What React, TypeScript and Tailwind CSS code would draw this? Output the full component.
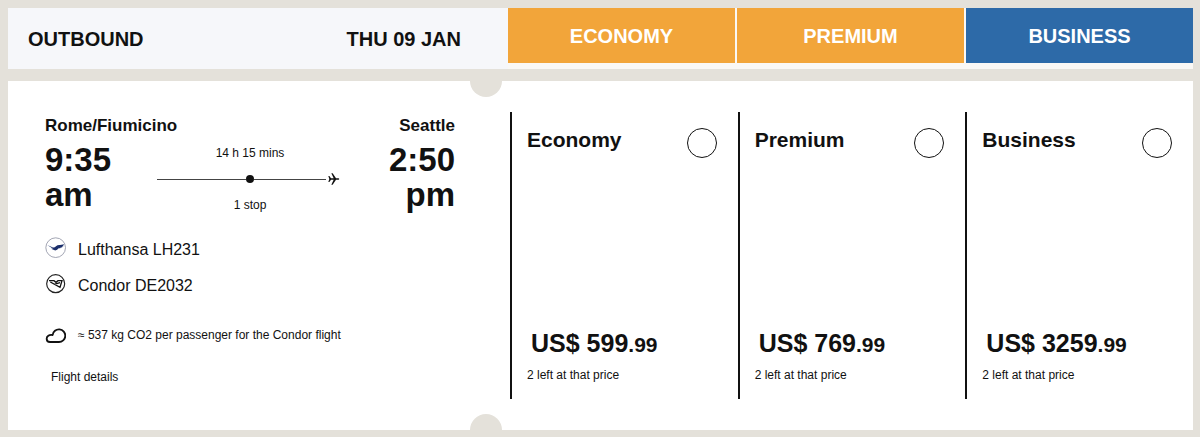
import { useState } from "react";

const fares = [
  { id: "economy", name: "Economy", whole: "599", cents: "99", left: 2, tab: "bg-[#f2a53a]" },
  { id: "premium", name: "Premium", whole: "769", cents: "99", left: 2, tab: "bg-[#f2a53a]" },
  { id: "business", name: "Business", whole: "3259", cents: "99", left: 2, tab: "bg-[#2d6aa8]" },
];

function LufthansaLogo() {
  return (
    <svg className="h-[21px] w-[21px] shrink-0" viewBox="0 0 63 63" aria-hidden="true">
      <circle cx="32" cy="32" r="29.5" fill="#fff" stroke="#8f93a3" strokeWidth="2.5" />
      <path
        d="M7 24 L22 31 Q28 33 33 28 Q38 23 45 24 L58 22 L54 26 L56 27 L51 29 L52 31 L46 32 L46 34 L41 34 Q36 41 29 40 L18 35 L24 35 Z"
        fill="#1b2f6b"
      />
    </svg>
  );
}

function CondorLogo() {
  return (
    <svg className="h-[21px] w-[21px] shrink-0" viewBox="0 0 63 63" aria-hidden="true">
      <circle cx="32" cy="32" r="27" fill="#fff" stroke="#222" strokeWidth="3.5" />
      <path
        d="M12 23 H27 L33 28 L39 23 H51 L45 43 L16 27 M28 34 L45 29"
        fill="none"
        stroke="#111"
        strokeWidth="4"
      />
    </svg>
  );
}

function CloudIcon() {
  return (
    <svg className="h-[15px] w-[21px] shrink-0" viewBox="0 0 63 45" aria-hidden="true">
      <path
        d="M15 42 H41 A19 19 0 1 0 23 21 C12 19 5 25 5 32 C5 38 9 42 15 42 Z"
        fill="none"
        stroke="#111"
        strokeWidth="5.5"
        strokeLinejoin="round"
      />
    </svg>
  );
}

function PlaneIcon() {
  return (
    <svg className="h-3 w-3 shrink-0" viewBox="0 0 36 36" aria-hidden="true">
      <path
        d="M1 9 H4 L9 16 H17 L10 1 H14 L24 16 H32 Q36 18 32 20 H24 L14 35 H10 L17 20 H9 L4 27 H1 L4 18 Z"
        fill="#111"
      />
    </svg>
  );
}

function FlightSummary() {
  return (
    <div className="pt-1 pr-[55px] pb-[14px] pl-[37px]">
      <div className="flex justify-between text-[17px] leading-5 font-bold">
        <span>Rome/Fiumicino</span>
        <span>Seattle</span>
      </div>

      <div className="mt-[6px] grid grid-cols-[68px_1fr_68px] gap-11">
        <div className="text-[33px] leading-[35px] font-bold">9:35 am</div>
        <div className="pt-[3px] text-center text-xs leading-4">
          <p>14 h 15 mins</p>
          <div className="my-[10px] grid h-4 grid-cols-[1fr_8px_1fr] items-center">
            <span className="h-px bg-[#444]" />
            <span className="h-2 rounded-full bg-[#111]" />
            <div className="flex items-center gap-[2px] pr-[3px]">
              <span className="h-px flex-1 bg-[#444]" />
              <PlaneIcon />
            </div>
          </div>
          <p>1 stop</p>
        </div>
        <div className="text-right text-[33px] leading-[35px] font-bold">2:50 pm</div>
      </div>

      <ul className="mt-6 flex flex-col gap-[10px] text-base leading-[26px]">
        <li className="flex items-start gap-3">
          <LufthansaLogo />
          Lufthansa LH231
        </li>
        <li className="flex items-start gap-3">
          <CondorLogo />
          Condor DE2032
        </li>
      </ul>

      <div className="mt-7 flex items-center gap-3 text-xs leading-4">
        <CloudIcon />
        <span>≈ 537 kg CO2 per passenger for the Condor flight</span>
      </div>

      <button type="button" className="mt-[26px] ml-[6px] block text-xs leading-4">
        Flight details
      </button>
    </div>
  );
}

export default function App() {
  const [selected, setSelected] = useState("");

  return (
    <main className="min-h-screen bg-[#e4e1da] pt-2 pr-[7px] pb-[7px] pl-2 font-['Liberation_Sans',Arial,sans-serif] text-[#111]">
      <header className="grid grid-cols-[500fr_685fr] bg-[#f6f7fa] text-xl leading-6 font-bold">
        <div className="flex items-center justify-between pr-[47px] pl-5">
          <h1>OUTBOUND</h1>
          <span>THU 09 JAN</span>
        </div>
        <div className="grid grid-cols-3 gap-[2px] bg-[#faf8f5] pb-[6px]">
          {fares.map((fare) => (
            <button
              key={fare.id}
              type="button"
              onClick={() => setSelected(fare.id)}
              className={`h-[55px] text-white uppercase ${fare.tab}`}
            >
              {fare.name}
            </button>
          ))}
        </div>
      </header>

      <section className="relative mt-3 grid grid-cols-[502fr_683fr] overflow-hidden bg-white py-[31px]">
        {/* Ticket notches */}
        <span className="absolute -top-4 left-[39%] h-8 w-8 rounded-full bg-[#e4e1da]" />
        <span className="absolute -bottom-4 left-[39%] h-8 w-8 rounded-full bg-[#e4e1da]" />

        <FlightSummary />

        <div className="grid grid-cols-3">
          {fares.map((fare) => (
            <div key={fare.id} className="flex flex-col justify-between border-l-2 border-[#111] pt-4 pb-4 pl-[15px]">
              <div className="flex items-start justify-between pr-[21px]">
                <label htmlFor={fare.id} className="text-[21px] leading-6 font-bold">
                  {fare.name}
                </label>
                <input
                  id={fare.id}
                  type="radio"
                  name="fare"
                  checked={selected === fare.id}
                  onChange={() => setSelected(fare.id)}
                  className="h-[30px] w-[30px] appearance-none rounded-full border border-[#111] checked:border-8"
                />
              </div>
              <div>
                <p className="ml-1 text-[25px] leading-7 font-bold">
                  US$ {fare.whole}
                  <span className="text-[21px]">.{fare.cents}</span>
                </p>
                <p className="mt-2 text-xs leading-4">{fare.left} left at that price</p>
              </div>
            </div>
          ))}
        </div>
      </section>
    </main>
  );
}
